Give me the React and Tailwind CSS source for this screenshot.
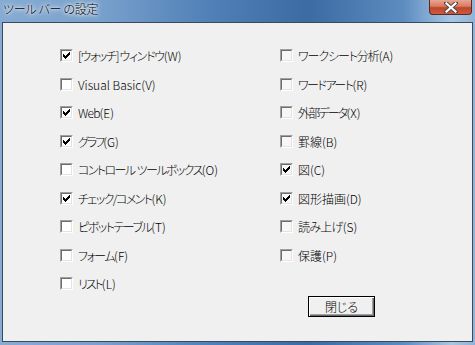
import React from "react";

const left = [
  { main: "[ウォッチ] ウィンドウ", key: "(W)", checked: true, t: "tracking-[-1.35px]" },
  { main: "Visual Basic", key: "(V)", checked: false, t: "" },
  { main: "Web", key: "(E)", checked: true, t: "tracking-[-0.8px]" },
  { main: "グラフ", key: "(G)", checked: true, t: "tracking-[-2px]" },
  { main: "コントロール  ツールボックス", key: "(O)", checked: false, t: "tracking-[-1.6px]" },
  { main: "チェック/コメント", key: "(K)", checked: true, t: "tracking-[-1.55px]" },
  { main: "ピボットテーブル", key: "(T)", checked: false, t: "tracking-[-1.5px]" },
  { main: "フォーム", key: "(F)", checked: false, t: "tracking-[-1.5px]" },
  { main: "リスト", key: "(L)", checked: false, t: "tracking-[-2px]" },
];

const right = [
  { main: "ワークシート分析", key: "(A)", checked: false, t: "tracking-[-1.1px]" },
  { main: "ワードアート", key: "(R)", checked: false, t: "tracking-[-1.5px]" },
  { main: "外部データ", key: "(X)", checked: false, t: "tracking-[-1.8px]" },
  { main: "罫線", key: "(B)", checked: false, t: "" },
  { main: "図", key: "(C)", checked: true, t: "" },
  { main: "図形描画", key: "(D)", checked: true, t: "" },
  { main: "読み上げ", key: "(S)", checked: false, t: "tracking-[-0.75px]" },
  { main: "保護", key: "(P)", checked: false, t: "" },
];

function CheckMark() {
  return (
    <svg width="9" height="9" viewBox="0 0 9 9" shapeRendering="crispEdges" className="block">
      <rect x="7" y="1" width="1" height="1" fill="#000" />
      <rect x="6" y="2" width="2" height="1" fill="#000" />
      <rect x="1" y="3" width="1" height="1" fill="#000" />
      <rect x="5" y="3" width="3" height="1" fill="#000" />
      <rect x="1" y="4" width="2" height="1" fill="#000" />
      <rect x="4" y="4" width="3" height="1" fill="#000" />
      <rect x="1" y="5" width="5" height="1" fill="#000" />
      <rect x="2" y="6" width="3" height="1" fill="#000" />
      <rect x="3" y="7" width="1" height="1" fill="#000" />
    </svg>
  );
}

function Box({ checked, alt }) {
  return (
    <div className="w-[13px] h-[13px] shrink-0 border border-t-[#a0a0a0] border-l-[#a0a0a0] border-b-white border-r-white">
      <div
        className={
          "w-[11px] h-[11px] border border-t-[#6d6d6d] border-l-[#6d6d6d] border-b-[#e3e3e3] border-r-[#e3e3e3] " +
          (alt ? "bg-[#f7f7f7]" : "bg-white")
        }
      >
        {checked && <CheckMark />}
      </div>
    </div>
  );
}

function Row({ item, index, alt }) {
  const mt = index === 0 ? "" : index % 2 === 1 ? "mt-[16px]" : "mt-[15px]";
  return (
    <div className={"flex items-center h-[13px] " + mt}>
      <Box checked={item.checked} alt={alt} />
      <span className="ml-[5px] text-[12px] leading-[13px] text-black whitespace-pre font-light">
        <span className={item.t}>{item.main}</span>
        <span>{item.key}</span>
      </span>
    </div>
  );
}

export default function App() {
  return (
    <div className="w-[475px] h-[345px] flex flex-col bg-[linear-gradient(to_right,#87abd3_0%,#7aa2cd_20%,#4f7fb6_45%,#3c6ba4_65%,#5d8cc0_85%,#a6c6e4_95%,#8fb3d8_100%)] font-['Noto_Sans_CJK_JP',sans-serif] [font-feature-settings:'palt'] overflow-hidden">
      <div className="h-[22px] flex items-start shrink-0">
        <div className="pl-[3px] pt-[1px] text-[12px] leading-[15px] text-black font-light tracking-[-0.3px] [text-shadow:0_0_6px_#ffffff,0_0_4px_#ffffff,0_0_2px_#ffffff]">
          ツール バー の設定
        </div>
        <div className="ml-auto mr-[3px] w-[43px] h-[15px] rounded-b-[4px] border border-t-0 border-[#5a2a22] bg-[linear-gradient(to_bottom,#e8a691_0%,#d77a62_45%,#c0442b_55%,#cf5a3d_100%)] flex items-center justify-center">
          <svg width="14" height="11" viewBox="0 0 14 11">
            <path d="M2 1 L12 10 M12 1 L2 10" stroke="#4a4a4a" strokeWidth="4" strokeLinecap="square" />
            <path d="M2.5 1.5 L11.5 9.5 M11.5 1.5 L2.5 9.5" stroke="#ffffff" strokeWidth="2.2" strokeLinecap="square" />
          </svg>
        </div>
      </div>
      <div className="flex-1 ml-[2px] mr-[2px] mb-[3px] border border-[#3a4a5e] bg-[#f0f0f0] flex pt-[26px]">
        <div className="flex flex-col ml-[57px] w-[220px]">
          {left.map((it, i) => (
            <Row key={i} item={it} index={i} />
          ))}
        </div>
        <div className="flex flex-col">
          {right.map((it, i) => (
            <Row key={i} item={it} index={i} alt />
          ))}
          <div className="mt-[34px] ml-[28px] w-[67px] h-[21px] border border-black bg-[#f0f0f0] shadow-[inset_1px_1px_0_#ffffff,inset_-1px_-1px_0_#696969,inset_-2px_-2px_0_#a0a0a0] flex items-center justify-center text-[12px] leading-[13px] text-black font-light">
            閉じる
          </div>
        </div>
      </div>
    </div>
  );
}
